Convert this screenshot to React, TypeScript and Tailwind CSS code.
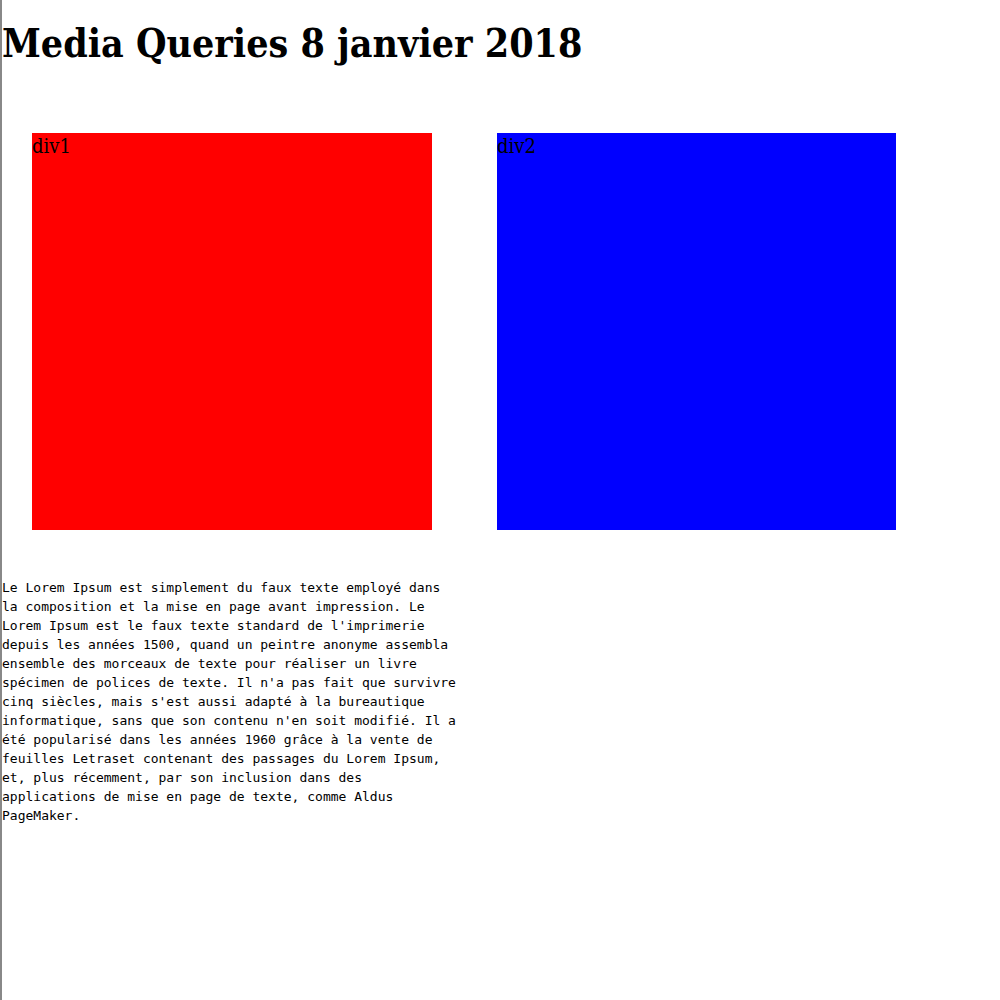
const sections = [
  { label: "div1", look: "w-[400px] bg-[#ff0000]" },
  { label: "div2", look: "w-[399px] bg-[#0000ff]" },
];

export default function App() {
  return (
    <main className="min-h-screen border-l-2 border-[#888888] bg-white text-black">
      <h1 className="pt-[17px] font-['DejaVu_Serif_Condensed','DejaVu_Serif',serif] text-[39px] leading-[52px] font-bold">
        Media Queries 8 janvier 2018
      </h1>
      <div className="mt-16 ml-[30px] flex flex-wrap gap-[65px] font-['DejaVu_Serif_Condensed','DejaVu_Serif',serif] text-[20px] leading-[26px]">
        {sections.map(({ label, look }) => (
          <div key={label} className={`h-[397px] ${look}`}>
            {label}
          </div>
        ))}
      </div>
      <p className="mt-12 max-w-[460px] font-['DejaVu_Sans_Mono',monospace] text-[13px] leading-[19px]">
        Le Lorem Ipsum est simplement du faux texte employé dans la composition
        et la mise en page avant impression. Le Lorem Ipsum est le faux texte
        standard de l'imprimerie depuis les années 1500, quand un peintre
        anonyme assembla ensemble des morceaux de texte pour réaliser un livre
        spécimen de polices de texte. Il n'a pas fait que survivre cinq
        siècles, mais s'est aussi adapté à la bureautique informatique, sans
        que son contenu n'en soit modifié. Il a été popularisé dans les années
        1960 grâce à la vente de feuilles Letraset contenant des passages du
        Lorem Ipsum, et, plus récemment, par son inclusion dans des
        applications de mise en page de texte, comme Aldus PageMaker.
      </p>
    </main>
  );
}
